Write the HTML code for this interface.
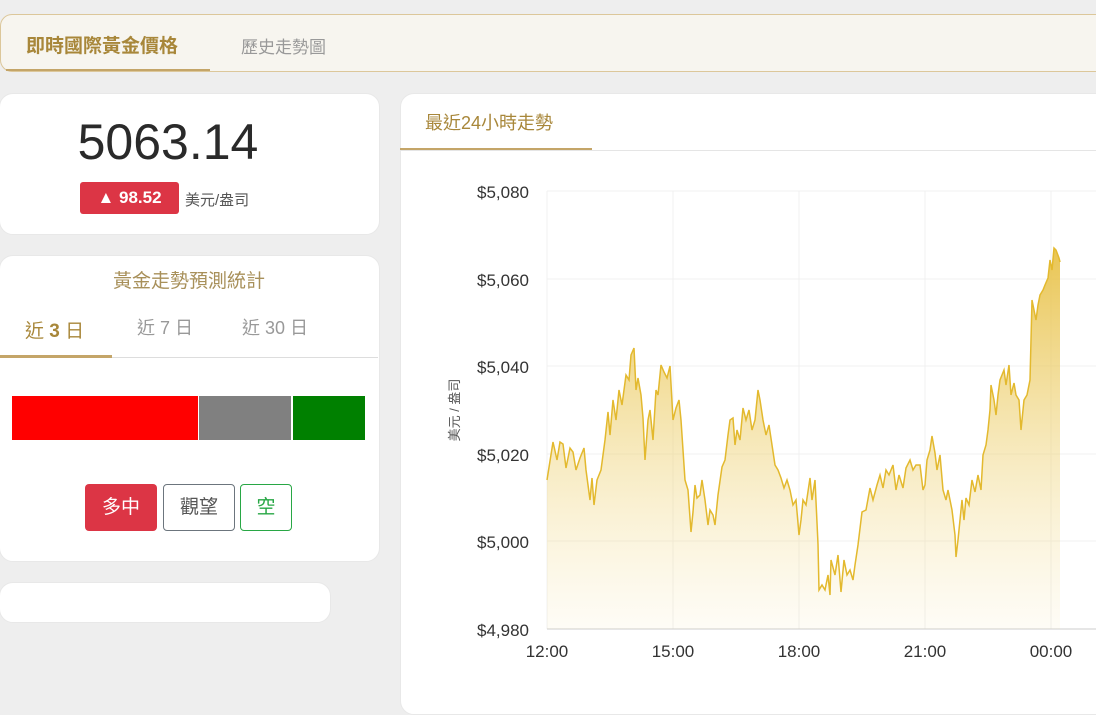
<!DOCTYPE html>
<html><head><meta charset="utf-8"><style>
body{margin:0;width:1096px;height:698px;overflow:hidden;background:#eeeeee;font-family:"Liberation Sans","Noto Sans CJK TC",sans-serif;position:relative}
.abs{position:absolute}
.card{position:absolute;background:#fff;border-radius:14px;border:1px solid #e8e8e8}
</style></head><body>
<div class="abs" style="left:0;top:14px;width:1110px;height:56px;background:#f7f5ef;border:1px solid #dcc79a;border-radius:12px;"></div>
<div class="abs" style="left:26px;top:31px;font-size:19px;color:#a8873a;font-weight:bold">即時國際黃金價格</div>
<div class="abs" style="left:6px;top:69px;width:204px;height:2px;background:#c4a568"></div>
<div class="abs" style="left:241px;top:33px;font-size:17px;color:#999">歷史走勢圖</div>

<div class="card" style="left:-1px;top:93px;width:379px;height:140px"></div>
<div class="abs" style="left:0;width:336px;top:113px;text-align:center;font-size:50px;color:#2a2a2a">5063.14</div>
<div class="abs" style="left:80px;top:182px;width:99px;height:32px;background:#dc3545;border-radius:3px;color:#fff;font-weight:bold;font-size:17px;line-height:32px;text-align:center">▲ 98.52</div>
<div class="abs" style="left:185px;top:189px;font-size:15px;color:#555">美元/盎司</div>

<div class="card" style="left:-1px;top:255px;width:379px;height:305px"></div>
<div class="abs" style="left:0;width:378px;top:266px;text-align:center;font-size:19px;color:#a8905a">黃金走勢預測統計</div>
<div class="abs" style="left:25px;top:316px;font-size:19px;color:#a8873a">近 <b>3</b> 日</div>
<div class="abs" style="left:137px;top:314px;font-size:18px;color:#999">近 7 日</div>
<div class="abs" style="left:242px;top:314px;font-size:18px;color:#999">近 30 日</div>
<div class="abs" style="left:0;top:357px;width:378px;height:1px;background:#ddd"></div>
<div class="abs" style="left:0;top:355px;width:112px;height:3px;background:#c4a568"></div>
<div class="abs" style="left:12px;top:396px;width:186px;height:44px;background:#f00"></div>
<div class="abs" style="left:199px;top:396px;width:92px;height:44px;background:#808080"></div>
<div class="abs" style="left:293px;top:396px;width:72px;height:44px;background:#008000"></div>
<div class="abs" style="left:85px;top:484px;width:72px;height:47px;background:#dc3545;border-radius:4px;color:#fff;font-size:19px;line-height:47px;text-align:center">多中</div>
<div class="abs" style="left:163px;top:484px;width:70px;height:45px;border:1px solid #6c757d;border-radius:4px;color:#555;font-size:19px;line-height:45px;text-align:center">觀望</div>
<div class="abs" style="left:240px;top:484px;width:50px;height:45px;border:1px solid #28a745;border-radius:4px;color:#28a745;font-size:19px;line-height:45px;text-align:center">空</div>

<div class="card" style="left:-1px;top:582px;width:330px;height:39px"></div>

<div class="card" style="left:400px;top:93px;width:720px;height:620px"></div>
<div class="abs" style="left:425px;top:109px;font-size:18px;color:#a8873a">最近24小時走勢</div>
<div class="abs" style="left:400px;top:150px;width:696px;height:1px;background:#e5e5e5"></div>
<div class="abs" style="left:400px;top:148px;width:192px;height:2px;background:#c4a568"></div>

<svg class="abs" style="left:0;top:0" width="1096" height="698">
<defs><linearGradient id="g" gradientUnits="userSpaceOnUse" x1="0" y1="250" x2="0" y2="629">
<stop offset="0" stop-color="#e8c24a" stop-opacity="0.95"/><stop offset="1" stop-color="#f5e3a5" stop-opacity="0.1"/></linearGradient></defs>
<g stroke="#f0f0f0" stroke-width="1">
<line x1="547" y1="191" x2="1096" y2="191"/><line x1="547" y1="279" x2="1096" y2="279"/><line x1="547" y1="366" x2="1096" y2="366"/><line x1="547" y1="454" x2="1096" y2="454"/><line x1="547" y1="541" x2="1096" y2="541"/>
<line x1="673" y1="191" x2="673" y2="629"/><line x1="799" y1="191" x2="799" y2="629"/><line x1="925" y1="191" x2="925" y2="629"/><line x1="1051" y1="191" x2="1051" y2="629"/><line x1="547" y1="191" x2="547" y2="629"/>
</g>
<line x1="547" y1="629" x2="1096" y2="629" stroke="#ccc"/>
<polygon fill="url(#g)" points="547,629 547,480 553,442 557,460 560,442 563,444 566,468 570,448 573,452 576,470 580,458 584,448 586,470 590,500 592,478 594,505 597,480 601,470 605,440 608,412 610,435 613,400 616,420 619,390 622,405 626,375 629,380 631,355 634,348 636,390 638,378 641,395 643,418 645,460 648,420 650,410 653,440 656,390 658,395 661,365 664,372 667,378 670,366 673,420 676,408 679,400 681,420 685,480 688,490 691,532 693,512 695,485 697,498 700,495 702,480 705,500 708,525 710,510 713,515 715,525 718,495 722,467 725,460 728,435 730,420 733,418 735,445 737,430 740,440 743,408 746,420 749,410 752,430 755,420 758,390 760,400 763,420 766,435 769,425 772,445 775,465 778,470 781,478 784,488 787,480 790,490 793,505 796,500 799,535 801,520 803,500 806,505 810,478 812,500 815,480 818,544 819,590 822,585 825,590 828,575 830,595 831,560 835,575 838,555 841,592 844,560 847,575 850,570 853,580 855,565 858,545 862,512 866,510 870,488 873,500 877,485 880,475 883,488 886,470 889,475 893,465 896,490 899,475 903,488 906,468 910,460 913,470 916,465 920,465 923,490 925,485 927,460 930,450 932,436 935,453 937,470 940,455 943,490 946,500 948,490 952,510 955,535 956,557 958,540 962,500 964,520 966,498 969,505 972,480 975,492 978,475 981,490 983,455 986,445 988,430 990,410 991,385 994,400 996,415 998,395 1000,380 1004,370 1006,385 1009,365 1011,395 1014,383 1016,395 1019,400 1021,430 1024,400 1027,395 1030,380 1032,300 1034,310 1036,320 1038,305 1040,295 1043,290 1045,285 1048,278 1050,260 1052,270 1054,248 1056,250 1059,258 1060,262 1060,629"/>
<polyline fill="none" stroke="#e3b92e" stroke-width="1.5" points="547,480 553,442 557,460 560,442 563,444 566,468 570,448 573,452 576,470 580,458 584,448 586,470 590,500 592,478 594,505 597,480 601,470 605,440 608,412 610,435 613,400 616,420 619,390 622,405 626,375 629,380 631,355 634,348 636,390 638,378 641,395 643,418 645,460 648,420 650,410 653,440 656,390 658,395 661,365 664,372 667,378 670,366 673,420 676,408 679,400 681,420 685,480 688,490 691,532 693,512 695,485 697,498 700,495 702,480 705,500 708,525 710,510 713,515 715,525 718,495 722,467 725,460 728,435 730,420 733,418 735,445 737,430 740,440 743,408 746,420 749,410 752,430 755,420 758,390 760,400 763,420 766,435 769,425 772,445 775,465 778,470 781,478 784,488 787,480 790,490 793,505 796,500 799,535 801,520 803,500 806,505 810,478 812,500 815,480 818,544 819,590 822,585 825,590 828,575 830,595 831,560 835,575 838,555 841,592 844,560 847,575 850,570 853,580 855,565 858,545 862,512 866,510 870,488 873,500 877,485 880,475 883,488 886,470 889,475 893,465 896,490 899,475 903,488 906,468 910,460 913,470 916,465 920,465 923,490 925,485 927,460 930,450 932,436 935,453 937,470 940,455 943,490 946,500 948,490 952,510 955,535 956,557 958,540 962,500 964,520 966,498 969,505 972,480 975,492 978,475 981,490 983,455 986,445 988,430 990,410 991,385 994,400 996,415 998,395 1000,380 1004,370 1006,385 1009,365 1011,395 1014,383 1016,395 1019,400 1021,430 1024,400 1027,395 1030,380 1032,300 1034,310 1036,320 1038,305 1040,295 1043,290 1045,285 1048,278 1050,260 1052,270 1054,248 1056,250 1059,258 1060,262"/>
<g font-family="Liberation Sans, sans-serif" font-size="17" fill="#333" text-anchor="end">
<text x="529" y="198">$5,080</text><text x="529" y="286">$5,060</text><text x="529" y="373">$5,040</text><text x="529" y="461">$5,020</text><text x="529" y="548">$5,000</text><text x="529" y="636">$4,980</text>
</g>
<g font-family="Liberation Sans, sans-serif" font-size="17" fill="#333" text-anchor="middle">
<text x="547" y="657">12:00</text><text x="673" y="657">15:00</text><text x="799" y="657">18:00</text><text x="925" y="657">21:00</text><text x="1051" y="657">00:00</text>
</g>
<text transform="translate(459,410) rotate(-90)" text-anchor="middle" font-family="Liberation Sans, Noto Sans CJK TC, sans-serif" font-size="13" fill="#555">美元 / 盎司</text>
</svg>
</body></html>
